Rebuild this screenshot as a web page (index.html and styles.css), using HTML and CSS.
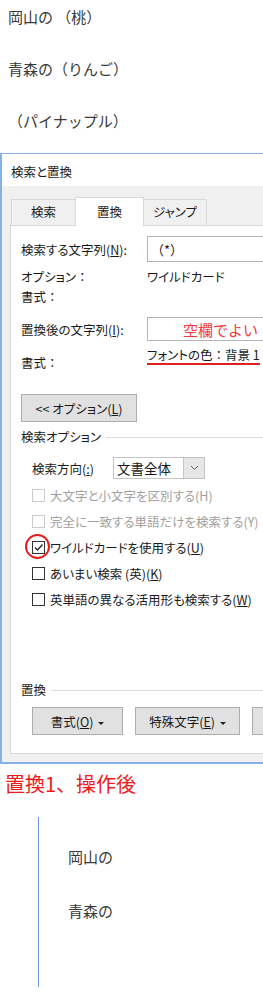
FILE: index.html
```html
<!DOCTYPE html>
<html lang="ja">
<head>
    <meta charset="UTF-8">
    <meta name="viewport" content="width=device-width, initial-scale=1.0">
    <title>置換</title>
    <link rel="stylesheet" href="styles.css">
</head>
<body>
    <div class="doc">
        <p>岡山の （桃）</p>
        <p>青森の（りんご）</p>
        <p>（パイナップル）</p>
    </div>

    <div class="dialog">
        <div class="dialog-title">検索と置換</div>
        <div class="dialog-body">
            <div class="tabs">
                <div class="tab">検索</div>
                <div class="tab active">置換</div>
                <div class="tab">ジャンプ</div>
            </div>
            <div class="panel">
                <div class="field-row find-row">
                    <span class="field-label">検索する文字列(<u>N</u>):</span>
                    <div class="text-box find-box">（*）</div>
                </div>
                <div class="info-row first-info">
                    <span class="field-label">オプション<span class="fw">：</span></span>
                    <span>ワイルドカード</span>
                </div>
                <div class="info-row">
                    <span class="field-label">書式<span class="fw">：</span></span>
                </div>

                <div class="field-row replace-row">
                    <span class="field-label">置換後の文字列(<u>I</u>):</span>
                    <div class="text-box replace-box"><span class="note">空欄でよい</span></div>
                </div>
                <div class="format-row">
                    <span class="field-label format-label">書式<span class="fw">：</span></span>
                    <span class="format-value">フォントの色<span class="fw">：</span>背景 1</span>
                </div>

                <button class="btn options-btn">&lt;&lt; オプション(<u>L</u>)</button>

                <div class="group-head search-head">検索オプション</div>

                <div class="direction-row">
                    <span class="direction-label">検索方向(<u>:</u>)</span>
                    <div class="select">
                        <span class="select-value">文書全体</span>
                        <span class="select-arrow">
                            <svg width="9" height="6" viewBox="0 0 9 6"><polyline points="1,1 4.5,4.5 8,1" fill="none" stroke="#606060" stroke-width="1"/></svg>
                        </span>
                    </div>
                </div>

                <div class="checks">
                    <div class="check disabled"><span class="box"></span>大文字と小文字を区別する(H)</div>
                    <div class="check disabled"><span class="box"></span>完全に一致する単語だけを検索する(Y)</div>
                    <div class="check">
                        <span class="box checked">
                            <svg width="11" height="11" viewBox="0 0 11 11"><polyline points="2,5.5 4.5,8 9.5,2.5" fill="none" stroke="#222" stroke-width="1.3"/></svg>
                            <span class="mark-circle"></span>
                        </span>ワイルドカードを使用する(<u>U</u>)
                    </div>
                    <div class="check"><span class="box"></span>あいまい検索 (英)(<u>K</u>)</div>
                    <div class="check"><span class="box"></span>英単語の異なる活用形も検索する(<u>W</u>)</div>
                </div>

                <div class="group-head replace-head">置換</div>

                <div class="bottom-buttons">
                    <button class="btn small-btn format-btn">書式(<u>O</u>) <span class="caret"></span></button>
                    <button class="btn small-btn special-btn">特殊文字(<u>E</u>) <span class="caret"></span></button>
                    <button class="btn small-btn clear-btn"></button>
                </div>
            </div>
        </div>
    </div>

    <div class="after-title">置換1、操作後</div>

    <div class="after-doc">
        <p>岡山の</p>
        <p>青森の</p>
    </div>
</body>
</html>
```

FILE: styles.css
```css
body {
    margin: 0;
    background: #fff;
    font-family: "Noto Sans CJK JP", "Noto Sans", sans-serif;
    color: #3a3a3a;
    overflow: hidden;
}

.doc {
    padding: 7px 0 0 8px;
}

.doc p, .after-doc p {
    margin: 0 0 32px;
    font-size: 15px;
    line-height: 20px;
}

.doc p:last-child {
    margin-bottom: 22px;
}

/* dialog */
.dialog {
    width: 263px;
    box-sizing: border-box;
    border: 1px solid #86b0e6;
    border-right: none;
    border-left-width: 2px;
    border-bottom-width: 2px;
    font-size: 12.5px;
    color: #1a1a1a;
    font-feature-settings: "palt";
    overflow: hidden;
}

.fw {
    font-feature-settings: normal;
}

.dialog-title {
    background: #fff;
    height: 32px;
    box-sizing: border-box;
    padding: 9px 0 0 9px;
    line-height: 18px;
}

.dialog-body {
    background: #f0f0f0;
    padding: 11px 0 8px 8px;
}

.tabs {
    display: flex;
    align-items: flex-end;
    margin-left: 1px;
    height: 28px;
}

.tab {
    height: 26px;
    box-sizing: border-box;
    border: 1px solid #d9d9d9;
    border-bottom: none;
    line-height: 24px;
    text-align: center;
    background: #f0f0f0;
    margin-left: -1px;
}

.tab:nth-child(1) { width: 65px; margin-left: 0; }
.tab:nth-child(2) { width: 69px; }
.tab:nth-child(3) { width: 64px; }

.tab.active {
    height: 29px;
    margin-bottom: -1px;
    background: #fff;
    position: relative;
    z-index: 1;
    line-height: 28px;
}

.panel {
    background: #fff;
    border: 1px solid #d9d9d9;
    border-right: none;
    padding: 10px 0 18px 10px;
}

.field-row {
    display: flex;
    align-items: center;
}

.field-label {
    width: 126px;
    flex: none;
}

.text-box {
    flex: 1;
    box-sizing: border-box;
    border: 1px solid #b4b4b4;
    border-right: none;
    background: #fff;
    display: flex;
    align-items: center;
}

.find-box {
    height: 26px;
    padding-left: 3px;
    font-size: 13px;
    font-feature-settings: normal;
}

.info-row {
    display: flex;
    line-height: 20px;
}

.first-info {
    margin-top: 5px;
}

.replace-row {
    margin-top: 10px;
}

.replace-box {
    height: 24px;
    padding-left: 35px;
}

.note {
    color: #f23a3a;
    font-size: 15px;
    font-feature-settings: normal;
}

.format-row {
    display: flex;
    align-items: flex-start;
    margin-top: 6px;
}

.format-label {
    padding-top: 6px;
    line-height: 20px;
}

.format-value {
    line-height: 16px;
    border-bottom: 2px solid #e02020;
    white-space: nowrap;
}

.btn {
    font-family: inherit;
    font-size: 12.5px;
    font-feature-settings: "palt";
    color: #1a1a1a;
    background: #e1e1e1;
    border: 1px solid #adadad;
    border-radius: 0;
    padding: 0;
    display: block;
    flex: none;
}

.options-btn {
    margin-top: 21px;
    width: 116px;
    height: 28px;
}

.group-head {
    display: flex;
    align-items: center;
    line-height: 18px;
}

.group-head::after {
    content: "";
    flex: 1;
    height: 1px;
    background: #dcdcdc;
    margin-left: 5px;
}

.search-head {
    margin-top: 6px;
}

.direction-row {
    display: flex;
    align-items: center;
    margin-top: 11px;
    padding-left: 11px;
}

.direction-label {
    width: 81px;
}

.select {
    width: 92px;
    height: 22px;
    box-sizing: border-box;
    border: 1px solid #c4c4c4;
    display: flex;
    font-size: 13.5px;
}

.select-value {
    flex: 1;
    padding-left: 3px;
    line-height: 20px;
}

.select-arrow {
    width: 20px;
    background: #e6e6e6;
    border-left: 1px solid #c4c4c4;
    display: flex;
    align-items: center;
    justify-content: center;
}

.checks {
    margin-top: 3px;
    padding-left: 11px;
}

.check {
    display: flex;
    align-items: center;
    height: 26px;
    white-space: nowrap;
}

.box {
    width: 13px;
    height: 13px;
    box-sizing: border-box;
    border: 1px solid #333;
    background: #fff;
    margin-right: 5px;
    flex: none;
    position: relative;
    display: flex;
    align-items: center;
    justify-content: center;
}

.check.disabled {
    color: #a0a0a0;
}

.check.disabled .box {
    border-color: #cccccc;
}

.mark-circle {
    position: absolute;
    left: -8px;
    top: -8px;
    width: 25px;
    height: 25px;
    box-sizing: border-box;
    border: 2px solid #e51c1c;
    border-radius: 50%;
}

.replace-head {
    margin-top: 69px;
}

.bottom-buttons {
    display: flex;
    gap: 12px;
    margin-top: 8px;
    padding-left: 11px;
}

.small-btn {
    height: 28px;
}

.format-btn { width: 91px; }
.special-btn { width: 105px; }
.clear-btn { width: 40px; border-right: none; }

.caret {
    display: inline-block;
    width: 0;
    height: 0;
    border-left: 3px solid transparent;
    border-right: 3px solid transparent;
    border-top: 3px solid #222;
    vertical-align: middle;
    margin-left: 2px;
}

/* after */
.after-title {
    color: #f01a1a;
    font-size: 20px;
    line-height: 28px;
    margin-top: 6px;
    padding-left: 5px;
}

.after-doc {
    margin: 19px 0 0 38px;
    border-left: 1px solid #6f95d8;
    height: 170px;
    box-sizing: border-box;
    padding: 30px 0 0 29px;
}

.after-doc p {
    margin-bottom: 34px;
}
```
